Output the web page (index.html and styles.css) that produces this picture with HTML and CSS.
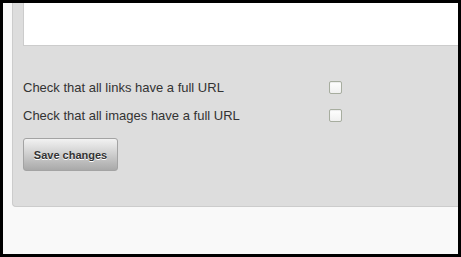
FILE: index.html
```html
<!DOCTYPE html>
<html>
<head>
<meta charset="utf-8">
<link rel="stylesheet" href="styles.css">
</head>
<body>
<div class="frame">
  <form class="panel">
    <textarea class="editor"></textarea>
    <div class="options">
      <label class="row">
        <span class="row-label">Check that all links have a full URL</span>
        <input type="checkbox" class="check">
      </label>
      <label class="row">
        <span class="row-label">Check that all images have a full URL</span>
        <input type="checkbox" class="check">
      </label>
    </div>
    <button type="button" class="save">Save changes</button>
  </form>
</div>
</body>
</html>
```

FILE: styles.css
```css
html, body {
  margin: 0;
  padding: 0;
  background: #000;
}

.frame {
  box-sizing: border-box;
  width: 461px;
  height: 257px;
  border: 3px solid #000;
  background: #f9f9f9;
  overflow: hidden;
}

.panel {
  display: flex;
  flex-direction: column;
  align-items: flex-start;
  margin: -10px -20px 0 9px;
  padding: 0 10px 35px 10px;
  background: #dddddd;
  border-left: 1px solid #cccccc;
  border-bottom: 1px solid #cccccc;
  border-bottom-left-radius: 4px;
}

.editor {
  display: block;
  box-sizing: border-box;
  width: 100%;
  height: 53px;
  margin: 0;
  padding: 0;
  border: 1px solid #cccccc;
  border-top: none;
  background: #fff;
  resize: none;
}

.options {
  display: flex;
  flex-direction: column;
  margin-top: 27px;
}

.row {
  display: flex;
  align-items: center;
  height: 28px;
  font-family: "Liberation Sans", Arial, sans-serif;
  font-size: 13px;
  color: #333;
}

.row-label {
  width: 306px;
}

.check {
  -webkit-appearance: none;
  appearance: none;
  box-sizing: border-box;
  width: 13px;
  height: 13px;
  margin: 0;
  border: 1px solid #a7ad9f;
  border-radius: 2px;
  background: linear-gradient(#ffffff, #f0f0f0);
  box-shadow: inset 0 1px 1px rgba(0,0,0,0.08);
}

.save {
  box-sizing: border-box;
  margin-top: 9px;
  height: 33px;
  width: 95px;
  padding: 0;
  border: 1px solid #a3a3a3;
  border-radius: 3px;
  background: linear-gradient(#f2f2f2, #a9a9a9);
  font-family: "Liberation Sans", Arial, sans-serif;
  font-weight: bold;
  font-size: 11px;
  color: #333;
  text-shadow: 0 1px 0 #fff;
}
```
